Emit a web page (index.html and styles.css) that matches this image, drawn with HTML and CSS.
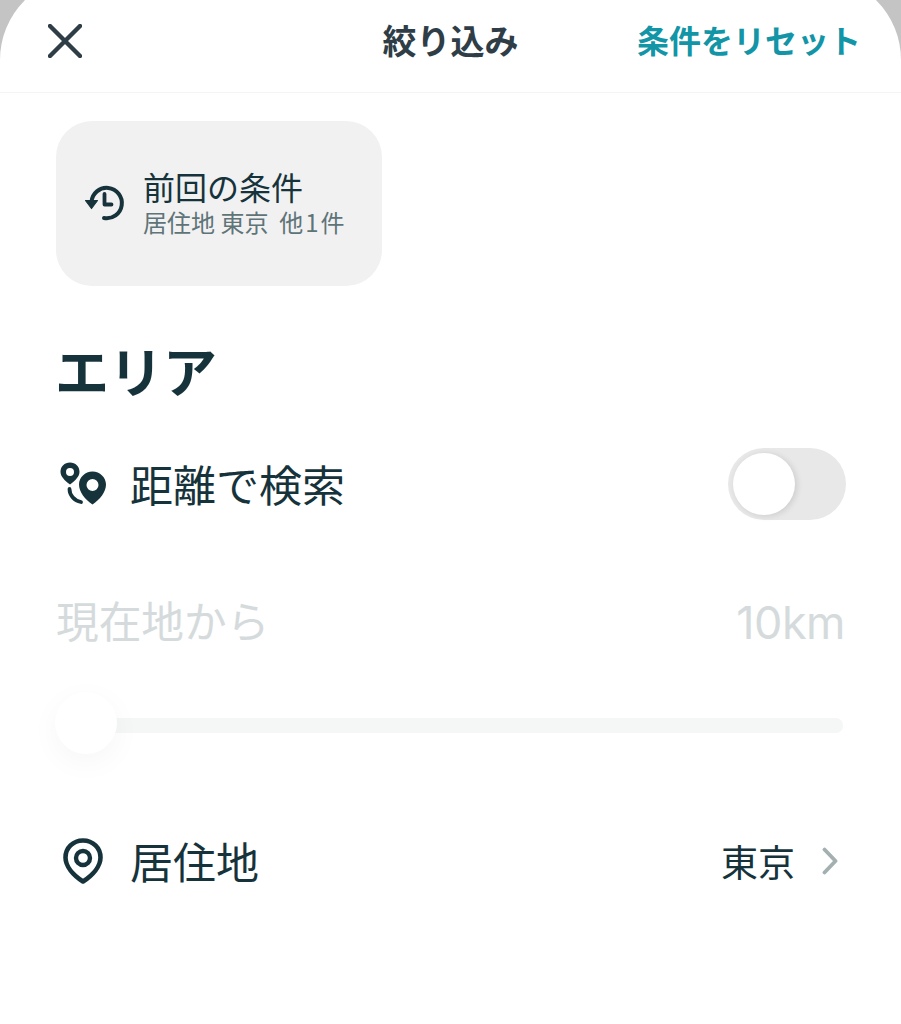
FILE: index.html
```html
<!DOCTYPE html>
<html lang="ja">
<head>
<meta charset="utf-8">
<title>絞り込み</title>
<link rel="stylesheet" href="styles.css">
</head>
<body>
<div class="sheet">
  <header class="header">
    <svg class="close" width="34" height="34" viewBox="0 0 34 34"><path d="M2 2 L32 32 M32 2 L2 32" fill="none" stroke="#2f3d47" stroke-width="4.4" stroke-linecap="round"/></svg>
    <h1 class="title">絞り込み</h1>
    <a class="reset">条件をリセット</a>
  </header>
  <main class="content">
    <div class="history">
      <svg class="history-icon" width="40" height="40" viewBox="0 0 40 40">
        <path d="M6.5 19 A15.2 15.2 0 1 1 19 35" fill="none" stroke="#16333b" stroke-width="4" stroke-linecap="round"/>
        <path d="M0.5 17.5 H12.5 L6.5 25.5 Z" fill="#16333b" stroke="#16333b" stroke-width="1.2" stroke-linejoin="round"/>
        <path d="M19.5 11 V21.5 H26.5" fill="none" stroke="#16333b" stroke-width="3.8" stroke-linecap="round" stroke-linejoin="round"/>
      </svg>
      <div class="history-text">
        <div class="history-title">前回の条件</div>
        <div class="history-sub">居住地 東京 &nbsp;他<span class="num">1</span>件</div>
      </div>
    </div>
    <h2 class="section">エリア</h2>
    <div class="row distance">
      <svg class="row-icon" width="48" height="44" viewBox="0 0 48 44">
        <path fill-rule="evenodd" d="M10 0.5 C15.5 0.5 19.5 4.5 19.5 9.8 C19.5 14.5 15.5 18.5 10 22.5 C4.5 18.5 0.5 14.5 0.5 9.8 C0.5 4.5 4.5 0.5 10 0.5 Z M10 6 A4 4 0 1 0 10 14 A4 4 0 1 0 10 6 Z" fill="#16333b"/>
        <path d="M9.5 27 C9.5 33 14 38.5 21 40" fill="none" stroke="#16333b" stroke-width="3.8" stroke-linecap="round"/>
        <path fill-rule="evenodd" d="M32.5 9.5 C40 9.5 46 15.5 46 22.5 C46 30 40 37.5 32.5 42.5 C25 37.5 19 30 19 22.5 C19 15.5 25 9.5 32.5 9.5 Z M32.5 17 A6 6 0 1 0 32.5 29 A6 6 0 1 0 32.5 17 Z" fill="#16333b"/>
      </svg>
      <span class="row-label">距離で検索</span>
      <div class="toggle"><div class="knob"></div></div>
    </div>
    <div class="range-head">
      <span class="range-label">現在地から</span>
      <span class="range-value">10km</span>
    </div>
    <div class="slider">
      <div class="track"></div>
      <div class="thumb"></div>
    </div>
    <div class="row residence">
      <svg class="row-icon pin" width="42" height="46" viewBox="0 0 42 46">
        <path d="M21 2.5 C31 2.5 38.5 10 38.5 19.5 C38.5 28 31 37 21 43.5 C11 37 3.5 28 3.5 19.5 C3.5 10 11 2.5 21 2.5 Z" fill="none" stroke="#16333b" stroke-width="4.6" stroke-linejoin="round"/>
        <circle cx="21" cy="20" r="7" fill="none" stroke="#16333b" stroke-width="4.4"/>
      </svg>
      <span class="row-label">居住地</span>
      <span class="row-value">東京</span>
      <svg class="chevron" width="16" height="28" viewBox="0 0 16 28"><path d="M2.5 2.5 L13.5 14 L2.5 25.5" fill="none" stroke="#a4b0b0" stroke-width="3.8" stroke-linecap="round" stroke-linejoin="round"/></svg>
    </div>
  </main>
</div>
</body>
</html>
```
FILE: styles.css
```css
* { box-sizing: border-box; }
html, body { margin: 0; padding: 0; }
body {
  width: 901px;
  height: 1024px;
  overflow: hidden;
  background: #c4c4c4;
  font-family: "Noto Sans CJK JP", "Noto Sans", sans-serif;
  color: #16333b;
}
.sheet {
  height: 1048px;
  margin-top: -24px;
  padding-top: 24px;
  background: #fff;
  border-radius: 84px 84px 0 0;
}
.header {
  height: 93px;
  padding: 0 40px 12px 48px;
  border-bottom: 1px solid #f3f4f4;
  display: grid;
  grid-template-columns: 1fr auto 1fr;
  align-items: center;
}
.close { display: block; margin-top: 2px; }
.title {
  margin: 0 8px 0 0;
  font-size: 34px;
  line-height: 44px;
  font-weight: 700;
  color: #2f3d47;
}
.reset {
  justify-self: end;
  margin-top: -2px;
  font-size: 32px;
  line-height: 44px;
  font-weight: 700;
  color: #1295a6;
}
.content { padding: 28px 56px 0 57px; }
.history {
  width: 326px;
  height: 165px;
  margin-left: -1px;
  border-radius: 36px;
  background: #f1f1f2;
  display: flex;
  align-items: center;
  padding-left: 29px;
  gap: 18px;
}
.history-icon { display: block; margin-bottom: 2px; }
.history-text { margin-bottom: 2px; }
.history-title { font-size: 32px; line-height: 36px; color: #16333b; }
.history-sub { margin-top: 2px; font-size: 24px; line-height: 32px; color: #5f7478; white-space: nowrap; }
.num { padding: 0 2px; }
.section {
  margin: 48px 0 0 -2px;
  font-size: 54px;
  line-height: 72px;
  font-weight: 700;
  color: #16333b;
}
.row { display: flex; align-items: center; }
.distance { margin-top: 42px; height: 72px; }
.row-icon { display: block; flex: none; }
.distance .row-icon { margin: 0 0 0 3px; }
.row-label { font-size: 43px; line-height: 60px; margin: -2px 0 0 22px; }
.toggle {
  margin-left: auto;
  margin-right: -1px;
  width: 118px;
  height: 72px;
  border-radius: 36px;
  background: #e8e8e9;
  padding: 5px 0 0 5px;
}
.knob {
  width: 62px;
  height: 62px;
  border-radius: 50%;
  background: #fff;
  box-shadow: 2px 1px 6px rgba(0, 0, 0, 0.12);
}
.range-head {
  margin-top: 72px;
  display: flex;
  justify-content: space-between;
  align-items: center;
  height: 60px;
  color: #d5dbdc;
}
.range-label { font-size: 42.7px; margin: -6px 0 0 -1px; }
.range-value { font-family: "Inter", "Noto Sans", sans-serif; font-size: 45px; letter-spacing: -0.5px; }
.slider {
  position: relative;
  margin-top: 39px;
  height: 64px;
  display: flex;
  align-items: center;
}
.track {
  width: 100%;
  height: 15px;
  margin: 5px 2px 0 0;
  border-radius: 7px;
  background: #f5f6f6;
}
.thumb {
  position: absolute;
  left: -2px;
  top: 1px;
  width: 62px;
  height: 62px;
  border-radius: 50%;
  background: #fff;
  box-shadow: 0 8px 30px rgba(0, 0, 0, 0.04);
}
.residence { margin-top: 76px; height: 60px; }
.residence .row-icon { margin-left: 5px; }
.residence .row-label { margin: -2px 0 0 26px; }
.row-value { margin: -1px 0 0 auto; font-size: 37px; line-height: 48px; color: #16333b; }
.chevron { display: block; margin: 0 7px 0 27px; }
```
